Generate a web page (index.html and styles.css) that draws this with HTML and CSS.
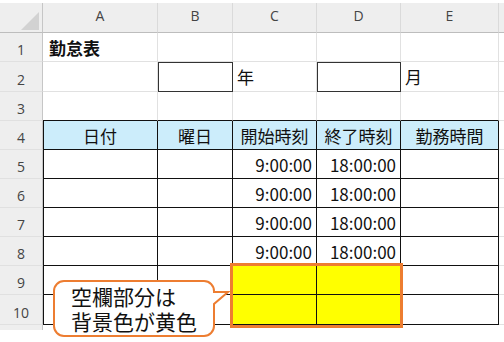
FILE: index.html
```html
<!DOCTYPE html>
<html lang="ja">
<head>
<meta charset="utf-8">
<title>勤怠表</title>
<link rel="stylesheet" href="styles.css">
</head>
<body>
<div class="sheet">
  <!-- header row -->
  <div class="hd corner"><svg width="20" height="20" viewBox="0 0 20 20"><polygon points="19,1 19,19 1,19" fill="#d2d2d2"/></svg></div>
  <div class="hd col">A</div>
  <div class="hd col">B</div>
  <div class="hd col">C</div>
  <div class="hd col">D</div>
  <div class="hd col">E</div>
  <div class="hd col last"></div>

  <!-- row 1 -->
  <div class="rh">1</div>
  <div class="c bold">勤怠表</div>
  <div class="c"></div><div class="c"></div><div class="c"></div><div class="c"></div><div class="c f"></div>

  <!-- row 2 -->
  <div class="rh">2</div>
  <div class="c"></div>
  <div class="c box"></div>
  <div class="c">年</div>
  <div class="c box"></div>
  <div class="c">月</div>
  <div class="c f"></div>

  <!-- row 3 -->
  <div class="rh">3</div>
  <div class="c tb"></div><div class="c tb"></div><div class="c tb"></div><div class="c tb"></div><div class="c tb"></div><div class="c f"></div>

  <!-- row 4 -->
  <div class="rh">4</div>
  <div class="c t tl th">日付</div>
  <div class="c t th">曜日</div>
  <div class="c t th">開始時刻</div>
  <div class="c t th">終了時刻</div>
  <div class="c t th">勤務時間</div>
  <div class="c f"></div>

  <!-- row 5 -->
  <div class="rh">5</div>
  <div class="c t tl"></div><div class="c t"></div>
  <div class="c t num">9:00:00</div><div class="c t num">18:00:00</div>
  <div class="c t"></div><div class="c f"></div>

  <!-- row 6 -->
  <div class="rh">6</div>
  <div class="c t tl"></div><div class="c t"></div>
  <div class="c t num">9:00:00</div><div class="c t num">18:00:00</div>
  <div class="c t"></div><div class="c f"></div>

  <!-- row 7 -->
  <div class="rh">7</div>
  <div class="c t tl"></div><div class="c t"></div>
  <div class="c t num">9:00:00</div><div class="c t num">18:00:00</div>
  <div class="c t"></div><div class="c f"></div>

  <!-- row 8 -->
  <div class="rh">8</div>
  <div class="c t tl"></div><div class="c t"></div>
  <div class="c t num">9:00:00</div><div class="c t num">18:00:00</div>
  <div class="c t"></div><div class="c f"></div>

  <!-- row 9 -->
  <div class="rh">9</div>
  <div class="c t tl"></div><div class="c t"></div>
  <div class="c t yel"></div><div class="c t yel"></div>
  <div class="c t"></div><div class="c f"></div>

  <!-- row 10 -->
  <div class="rh">10</div>
  <div class="c t tl"></div><div class="c t"></div>
  <div class="c t yel"></div><div class="c t yel"></div>
  <div class="c t"></div><div class="c f"></div>

  <!-- row 11 (cut off) -->
  <div class="rh stub"></div>

  <div class="highlight"></div>

  <div class="callout">
    <svg class="bubble" width="180" height="60" viewBox="0 0 180 60">
      <path d="M11,1 H151 A10,10 0 0 1 161,11 V12 L175,12 L161,24 V46 A10,10 0 0 1 151,56 H11 A10,10 0 0 1 1,46 V11 A10,10 0 0 1 11,1 Z" fill="#ffffff" stroke="#ed7d31" stroke-width="2"/>
    </svg>
    <div class="callout-text">空欄部分は<br>背景色が黄色</div>
  </div>
</div>
</body>
</html>
```
FILE: styles.css
```css
* { box-sizing: border-box; }
html, body { margin: 0; padding: 0; background: #ffffff; }
body {
  width: 504px;
  height: 342px;
  overflow: hidden;
  padding-top: 3px;
  font-family: "Noto Sans CJK JP", "Noto Sans", sans-serif;
  color: #111111;
}
.sheet {
  position: relative;
  display: grid;
  grid-template-columns: 43px 115px 75px 84px 84px 98px 5px;
  grid-template-rows: 30px 29px 30px 29px 29px 29px 29px 29px 29px 29px 30px 3px;
  width: 504px;
}
.hd {
  background: #eeeeee;
  border-bottom: 1px solid #bdbdbd;
  border-right: 1px solid #dadada;
  display: flex;
  align-items: center;
  justify-content: center;
  padding-bottom: 4px;
  font-family: "Open Sans", "Noto Sans", sans-serif;
  font-size: 14px;
  color: #444444;
}
.hd.corner {
  border-right: 1px solid #c6c6c6;
  justify-content: flex-end;
  align-items: flex-end;
  padding: 0 2px 1px 0;
}
.hd.last { border-right: none; }
.rh {
  background: #eeeeee;
  border-right: 1px solid #c6c6c6;
  border-bottom: 1px solid #e0e0e0;
  display: flex;
  align-items: center;
  justify-content: center;
  padding-top: 5px;
  font-family: "Open Sans", "Noto Sans", sans-serif;
  font-size: 14px;
  color: #444444;
}
.rh.stub { border-bottom: none; }
.c {
  border-right: 1px solid #e1e1e1;
  border-bottom: 1px solid #e1e1e1;
  display: flex;
  align-items: center;
  padding: 0 4px;
  font-size: 17px;
  white-space: nowrap;
  color: #111111;
}
.c.f { border-right: none; }
.bold { font-weight: 700; padding-left: 6px; }
.box {
  border-right-color: #333333;
  border-bottom-color: #333333;
  box-shadow: inset 1px 1px 0 #333333;
}
.tb { border-bottom-color: #111111; }
.t {
  border-right-color: #111111;
  border-bottom-color: #111111;
}
.tl { box-shadow: inset 1px 0 0 #111111; }
.th {
  background: #ccedfb;
  justify-content: center;
}
.num { justify-content: flex-end; padding-right: 4px; }
.yel { background: #ffff00; }
.highlight {
  position: absolute;
  left: 230px;
  top: 260px;
  width: 173px;
  height: 65px;
  border: 3px solid #ed7d31;
  pointer-events: none;
}
.callout {
  position: absolute;
  left: 53px;
  top: 277px;
  width: 180px;
  height: 60px;
}
.bubble {
  position: absolute;
  left: 0;
  top: 0;
}
.callout-text {
  position: relative;
  padding: 4px 0 0 18px;
  font-size: 21px;
  line-height: 25px;
  color: #111111;
  white-space: nowrap;
}
```
